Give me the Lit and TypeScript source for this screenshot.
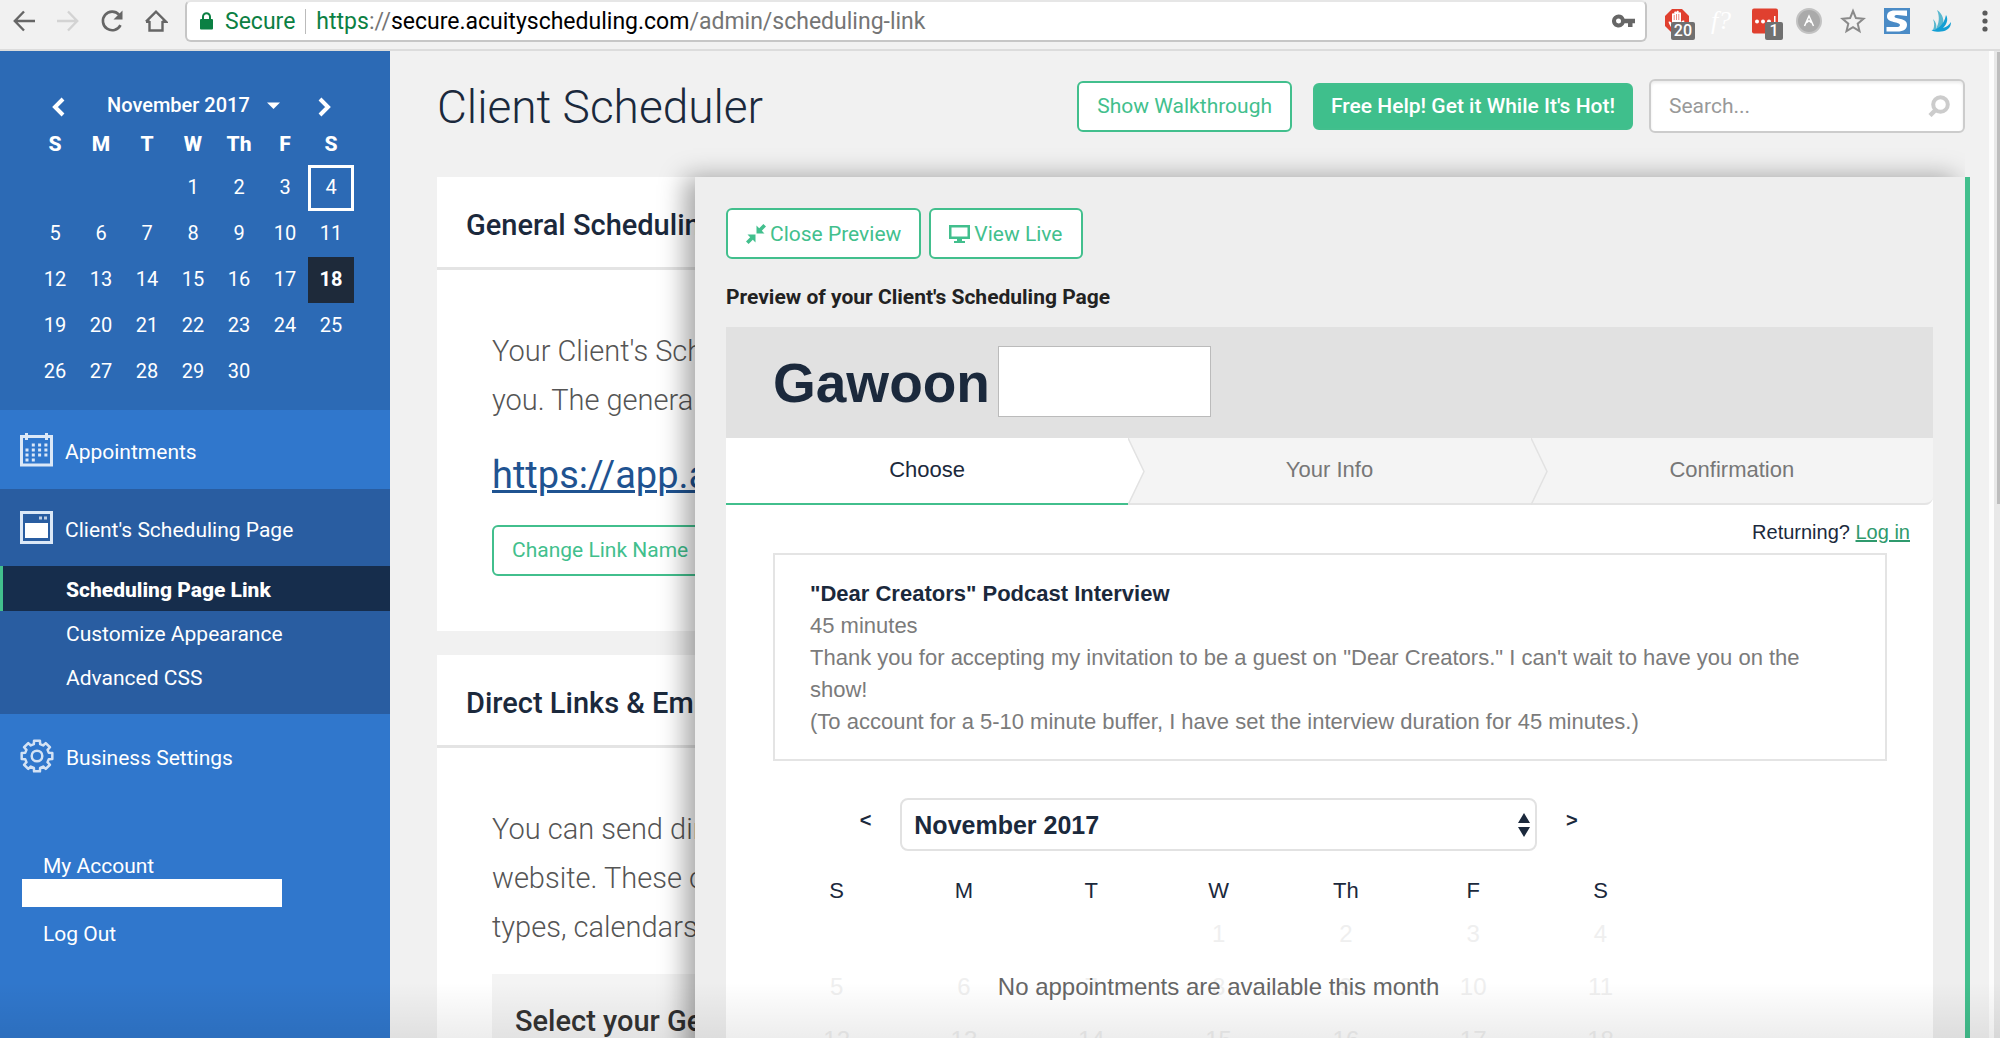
import { LitElement, html, css, svg } from "lit";
import { customElement, state } from "lit/decorators.js";
import { classMap } from "lit/directives/class-map.js";

const WEEKDAYS = ["S", "M", "T", "W", "Th", "F", "S"];

/** Days of November 2017 in weeks; 0 marks an empty cell. */
const WEEKS: number[][] = Array.from({ length: 5 }, (_, week) =>
  Array.from({ length: 7 }, (_, day) => {
    const date = week * 7 + day - 2;
    return date >= 1 && date <= 30 ? date : 0;
  })
);

const base = css`
  :host {
    display: block;
    font-family: Roboto, "Liberation Sans", sans-serif;
  }
  * {
    box-sizing: border-box;
  }
  h1, h2, h3, p {
    margin: 0;
  }
  button, input, select {
    font: inherit;
    color: inherit;
    margin: 0;
  }
  button, select {
    cursor: pointer;
  }
  svg {
    display: block;
    flex: none;
  }
`;

const buttons = css`
  .btn {
    display: inline-flex;
    align-items: center;
    gap: 4px;
    height: 51px;
    padding: 0 18px;
    border: 2px solid #42bf8d;
    border-radius: 6px;
    background: #fff;
    color: #42bf8d;
    font-size: 21px;
    font-weight: 400;
    white-space: nowrap;
    text-decoration: none;
  }
  .btn.solid {
    height: 47px;
    padding: 0 16px;
    background: #3fbf8c;
    color: #fff;
    font-weight: 500;
  }
`;

@customElement("browser-bar")
export class BrowserBar extends LitElement {
  static styles = [
    base,
    css`
      .bar {
        display: flex;
        height: 51px;
        background: #f1f1f1;
        border-bottom: 2px solid #dcdcdc;
        color: #5f5f5f;
      }
      .icon {
        display: flex;
        align-items: center;
        justify-content: center;
        width: 44px;
        height: 41px;
        padding: 0;
        border: 0;
        background: none;
      }
      .history {
        display: flex;
        padding: 0 7px 0 2px;
      }
      .address {
        flex: 1;
        display: flex;
        align-items: center;
        height: 42px;
        padding: 0 9px 0 12px;
        border: 2px solid #c6c6c6;
        border-top-color: #e6e6e6;
        border-radius: 6px;
        background: #fff;
        font-size: 23px;
        line-height: 25px;
        white-space: nowrap;
      }
      .secure {
        padding: 0 10px 0 11px;
        border-right: 1px solid #bbb;
        color: #0b8043;
      }
      .url {
        flex: 1;
        padding-left: 10px;
        color: #757575;
      }
      .scheme {
        color: #0b8043;
      }
      .domain {
        color: #000;
      }
      .tools {
        display: flex;
        padding-left: 8px;
      }
      .tool {
        position: relative;
      }
      .badge {
        position: absolute;
        right: 4px;
        top: 22px;
        min-width: 18px;
        padding: 0 3px;
        border-radius: 2px;
        background: #707070;
        color: #fff;
        font-size: 16px;
        font-weight: 500;
        line-height: 18px;
      }
      .formula {
        color: #fff;
        font: italic 26px "Liberation Serif", serif;
      }
      .menu {
        width: 37px;
        justify-content: flex-end;
        padding-right: 12px;
      }
    `,
  ];

  render() {
    return html`
      <header class="bar">
        <nav class="history" aria-label="History">
          <button class="icon" aria-label="Back">
            <svg width="24" height="24" viewBox="0 0 24 24" fill="none" stroke="#666" stroke-width="2.400"><path d="M23 12H3M12 2.500L2.800 12l9.200 9.500" /></svg>
          </button>
          <button class="icon" aria-label="Forward">
            <svg width="24" height="24" viewBox="0 0 24 24" fill="none" stroke="#d3d3d3" stroke-width="2.400"><path d="M1 12h20M12 2.500l9.200 9.500-9.200 9.500" /></svg>
          </button>
          <button class="icon" aria-label="Reload">
            <svg width="24" height="24" viewBox="0 0 24 24" fill="none" stroke="#666" stroke-width="2.600"><path d="M20.500 16.200A9.300 9.300 0 1 1 19 5.600" /><path d="M22.500 1.500v9h-9z" fill="#666" stroke="none" /></svg>
          </button>
          <button class="icon" aria-label="Home">
            <svg width="24" height="24" viewBox="0 0 24 24" fill="none" stroke="#666" stroke-width="2.400"><path d="M5.500 12v9.500h13V12M2 12.700L12 2.600l10 10.100h-4M2 12.700h4" /></svg>
          </button>
        </nav>
        <div class="address">
          <svg width="15" height="18" viewBox="0 0 15 18"><rect x="1" y="7" width="13" height="10.500" rx="1" fill="#0b8043" /><path d="M4 7.500V4.800a3.500 3.500 0 0 1 7 0v2.700" fill="none" stroke="#0b8043" stroke-width="2" /></svg>
          <span class="secure">Secure</span>
          <span class="url"><span class="scheme">https</span>://<span class="domain">secure.acuityscheduling.com</span>/admin/scheduling-link</span>
          <svg width="24" height="14" viewBox="0 0 24 14" fill="#666"><path fill-rule="evenodd" d="M6.500 0.500a6.500 6.500 0 1 0 6.100 8.700H16V13h4.500V9.200H23V4.800H12.600A6.500 6.500 0 0 0 6.500 0.500zm0 4a2.500 2.500 0 1 1 0 5 2.500 2.500 0 0 1 0-5z" /></svg>
        </div>
        <div class="tools">
          <button class="icon tool" aria-label="Ad blocker">
            <svg width="26" height="26" viewBox="0 0 26 26"><path d="M8 1h10l7 7v10l-7 7H8l-7-7V8z" fill="#e0402f" /><path d="M8 21c-1-2-3-5-3.500-7 1-1 2.500 0 3.500 1.800V6.500c0-1.600 2.200-1.600 2.200 0V4.600c0-1.600 2.300-1.600 2.300 0V4c0-1.600 2.300-1.600 2.300 0v1.400c0-1.500 2.200-1.500 2.200 0V14c1-1.300 2.500-2 3.500-1-1 2-2 5-4 8z" fill="#fff" /><path d="M10.200 7v5M12.500 6v6M14.800 6v6" stroke="#e0402f" stroke-width=".6" /></svg>
            <span class="badge">20</span>
          </button>
          <button class="icon formula">f?</button>
          <button class="icon tool" aria-label="Passwords">
            <svg width="26" height="26" viewBox="0 0 26 26"><rect width="26" height="25" rx="2" y="0.500" fill="#e0402f" /><g fill="#fff"><circle cx="5" cy="13.500" r="2" /><circle cx="11" cy="13.500" r="2" /><circle cx="17" cy="13.500" r="2" /><rect x="22" y="8" width="1.500" height="9" /></g></svg>
            <span class="badge">1</span>
          </button>
          <button class="icon" aria-label="Annotate">
            <svg width="26" height="26" viewBox="0 0 26 26" fill="none"><circle cx="13" cy="13" r="12" fill="#aaa" stroke="#c2c2c2" stroke-width="2" /><path d="M8.500 18L13 8l4.500 10M10.500 14.700l2.500-2 2.500 2" stroke="#fff" stroke-width="1.500" /></svg>
          </button>
          <button class="icon" aria-label="Bookmark">
            <svg width="26" height="26" viewBox="0 0 26 26" fill="none" stroke="#8a8a8a" stroke-width="2"><path d="M13 3l2.900 7.100 7.600.6-5.800 5 1.800 7.400L13 19.100l-6.500 4 1.800-7.400-5.800-5 7.600-.6z" /></svg>
          </button>
          <button class="icon" aria-label="Snippets">
            <svg width="26" height="26" viewBox="0 0 26 26"><rect width="26" height="26" fill="#4a8bc6" /><path d="M23 8V2.500H11C5 2.500 3 5 3 8.700c0 6.300 13 4.800 13 8.300 0 1.700-2 2-4 2H2.500v4.500H13c7 0 10-2.300 10-7 0-7-12.500-5-12.500-8C10.500 7 12 7 13.500 7 17 7 20 8 23 8z" fill="#fff" /></svg>
          </button>
          <button class="icon" aria-label="Sharing">
            <svg width="22" height="24" viewBox="0 0 22 24"><path d="M7 1c6 4 8 10 5 19H6c3-6 4-12 1-19z" fill="#5bb8cf" /><path d="M3 10c3 3 4 6 3 10l-3 1c1.500-4 1.500-7 0-11z" fill="#5bb8cf" /><path d="M16 6c3 5 0 10-3 13 4-1 6-3 8-6 0 6-4 9-10 9.500-4 .3-8 .5-9.500-1.500C6 21 14 17 16 6z" fill="#139fd4" /></svg>
          </button>
          <button class="icon menu" aria-label="Menu">
            <svg width="6" height="22" viewBox="0 0 6 22" fill="#5a5a5a"><circle cx="3" cy="3" r="2.600" /><circle cx="3" cy="11" r="2.600" /><circle cx="3" cy="19" r="2.600" /></svg>
          </button>
        </div>
      </header>
    `;
  }
}

/** Outline of a round gear with eight teeth, centred on (17, 17). */
const gearPath = (): string => {
  const points: string[] = [];
  for (let tooth = 0; tooth < 8; tooth++) {
    const mid = (tooth * Math.PI) / 4;
    for (const [offset, radius] of [[-0.26, 12.200], [-0.19, 15.600], [0.19, 15.600], [0.26, 12.200]]) {
      const x = 17 + radius * Math.sin(mid + offset);
      const y = 17 - radius * Math.cos(mid + offset);
      points.push(`${x.toFixed(2)} ${y.toFixed(2)}`);
    }
  }
  return `M${points.join("L")}z`;
};

@customElement("side-nav")
export class SideNav extends LitElement {
  static styles = [
    base,
    css`
      :host {
        background: #3077cc;
        color: #fff;
        font-size: 21px;
      }
      .calendar {
        height: 359px;
        padding: 31px 36px 0 32px;
        background: #2c6ab5;
      }
      .month {
        display: flex;
        align-items: center;
        justify-content: space-between;
        height: 46px;
        padding: 0 22px 0 19px;
      }
      .arrow {
        padding: 4px 0 0;
        border: 0;
        background: none;
      }
      .picker {
        display: flex;
        align-items: center;
        gap: 17px;
        padding-left: 4px;
      }
      .picker select {
        appearance: none;
        padding: 0;
        border: 0;
        background: none;
        font-size: 20px;
        font-weight: 500;
      }
      .days {
        width: 322px;
        table-layout: fixed;
        border-collapse: collapse;
        text-align: center;
      }
      .days th, .days td {
        height: 46px;
        padding: 0 0 3px;
        font-size: 20px;
      }
      .days th {
        height: 37px;
        font-size: 21px;
        font-weight: 800;
        padding: 0 0 5px;
      }
      .days td.outlined {
        box-shadow: inset 0 0 0 3px #fff;
      }
      .days td.today {
        background: #1e2a3a;
        font-weight: 700;
      }
      a {
        color: inherit;
        text-decoration: none;
      }
      .item {
        display: flex;
        align-items: center;
        gap: 12px;
        height: 79px;
        padding-left: 20px;
      }
      .item span {
        padding-top: 4px;
      }
      .item.settings {
        height: 84px;
      }
      .group {
        padding-bottom: 15px;
        background: #295da1;
      }
      .group .item {
        height: 77px;
      }
      .sub {
        display: flex;
        align-items: center;
        height: 44px;
        padding: 2px 0 0 66px;
      }
      .sub.active {
        height: 45px;
        padding-left: 63px;
        border-left: 3px solid #42bf8d;
        background: #162d4c;
        font-weight: 800;
      }
      .account {
        display: flex;
        flex-direction: column;
        padding: 55px 22px 0;
      }
      .account a {
        height: 26px;
        padding-left: 21px;
        line-height: 27px;
      }
      .blank {
        width: 260px;
        height: 28px;
        margin-bottom: 14px;
        background: #fff;
      }
    `,
  ];

  render() {
    return html`
      <section class="calendar">
        <div class="month">
          <button class="arrow" aria-label="Previous month">
            <svg width="14" height="20" viewBox="0 0 14 20" fill="none" stroke="#fff" stroke-width="4"><path d="M12 2L4 10l8 8" /></svg>
          </button>
          <label class="picker">
            <select aria-label="Month">
              <option>November 2017</option>
            </select>
            <svg width="13" height="7" viewBox="0 0 13 7" fill="#fff"><path d="M0 .5h13L6.500 7z" /></svg>
          </label>
          <button class="arrow" aria-label="Next month">
            <svg width="14" height="20" viewBox="0 0 14 20" fill="none" stroke="#fff" stroke-width="4"><path d="M2 2l8 8-8 8" /></svg>
          </button>
        </div>
        <table class="days">
          <thead>
            <tr>${WEEKDAYS.map((day) => html`<th scope="col">${day}</th>`)}</tr>
          </thead>
          <tbody>
            ${WEEKS.map(
              (week) => html`<tr>
                ${week.map((day) => html`<td class=${classMap({ outlined: day === 4, today: day === 18 })}>${day || ""}</td>`)}
              </tr>`
            )}
          </tbody>
        </table>
      </section>
      <nav aria-label="Main">
        <a class="item" href="#appointments">
          <svg width="33" height="34" viewBox="0 0 33 34" fill="#dbe8f7">
            <path d="M1.500 3.500h30v28.500h-30z" fill="none" stroke="#dbe8f7" stroke-width="3" />
            <rect x="5" y="0" width="3" height="7" /><rect x="25" y="0" width="3" height="7" />
            ${[0, 1, 2, 3].flatMap((row) =>
              [0, 1, 2, 3].map((col) =>
                (row === 0 && col === 0) || (row === 3 && col > 1)
                  ? svg``
                  : svg`<rect x=${5.5 + col * 6.300} y=${10.500 + row * 5} width="3" height="3" />`
              )
            )}
          </svg>
          <span>Appointments</span>
        </a>
        <div class="group">
          <a class="item" href="#scheduling">
            <svg width="33" height="33" viewBox="0 0 33 33" fill="#fff">
              <path d="M1.500 1.500h30v30h-30z" fill="none" stroke="#dbe8f7" stroke-width="3" />
              <rect x="5" y="12" width="23" height="15" />
              <rect x="19" y="5.500" width="3" height="3" opacity=".7" /><rect x="24" y="5.500" width="3" height="3" opacity=".7" />
            </svg>
            <span>Client's Scheduling Page</span>
          </a>
          <a class="sub active" href="#link" aria-current="page">Scheduling Page Link</a>
          <a class="sub" href="#appearance">Customize Appearance</a>
          <a class="sub" href="#css">Advanced CSS</a>
        </div>
        <a class="item settings" href="#settings">
          <svg width="34" height="34" viewBox="0 0 34 34" fill="none" stroke="#d3e2f4" stroke-width="2.500" stroke-linejoin="round">
            <path d=${gearPath()} /><circle cx="17" cy="17" r="5.300" />
          </svg>
          <span>Business Settings</span>
        </a>
      </nav>
      <div class="account">
        <a href="#account">My Account</a>
        <div class="blank"></div>
        <a href="#logout">Log Out</a>
      </div>
    `;
  }
}

@customElement("client-preview")
export class ClientPreview extends LitElement {
  @state() private step = 0;

  static styles = [
    base,
    buttons,
    css`
      :host {
        padding: 31px 32px 0 31px;
        background: #eee;
      }
      .actions {
        display: flex;
        gap: 8px;
      }
      .title {
        margin: 24px 0 16px;
        color: #222;
        font-size: 21px;
        font-weight: 700;
        line-height: 28px;
      }
      .page {
        background: #fff;
        font-family: "Liberation Sans", Arial, sans-serif;
        color: #1b293c;
        font-size: 22px;
      }
      .owner {
        display: flex;
        align-items: center;
        gap: 8px;
        height: 111px;
        padding-left: 47px;
        background: #e1e1e1;
      }
      .owner h2 {
        font-size: 55px;
        font-weight: 700;
      }
      .blank {
        width: 213px;
        height: 71px;
        margin-bottom: 2px;
        border: 1px solid #bbb;
        background: #fff;
      }
      .steps {
        display: grid;
        grid-template-columns: repeat(3, 1fr);
        height: 67px;
        background: #f4f4f4;
        border-radius: 0 0 8px 0;
      }
      .step {
        display: flex;
        position: relative;
        align-items: center;
        justify-content: center;
        padding: 0 0 2px;
        border: 0;
        border-bottom: 2px solid #e4e4e4;
        background: none;
        color: #777;
      }
      .step:last-child {
        border-radius: 0 0 8px 0;
      }
      .step.current {
        border-bottom-color: #42bf8d;
        background: #fff;
        color: #1b293c;
      }
      .point {
        position: absolute;
        left: 100%;
        top: 0;
        z-index: 1;
      }
      .login {
        padding: 16px 23px 0 0;
        font-size: 20px;
        line-height: 22px;
        text-align: right;
      }
      .login a {
        color: #2f9a6d;
      }
      .body {
        padding: 10px 46px 0 47px;
      }
      .offer {
        padding: 23px 36px 21px 35px;
        border: 2px solid #e4e4e4;
        color: #7b7b7b;
        line-height: 32px;
      }
      .offer h3 {
        color: #1b293c;
        font-size: 22px;
      }
      .month {
        width: 80%;
        padding-top: 37px;
      }
      .pager {
        display: grid;
        grid-template-columns: 1fr 5fr 1fr;
      }
      .turn {
        height: 45px;
        padding: 0 29px;
        border: 0;
        background: none;
        font-size: 20px;
        font-weight: 700;
        text-align: right;
      }
      .turn.next {
        text-align: left;
      }
      .select {
        display: grid;
        align-items: center;
      }
      .select > * {
        grid-area: 1 / 1;
      }
      .select select {
        appearance: none;
        width: 100%;
        height: 53px;
        padding: 0 12px;
        border: 2px solid #e2e2e2;
        border-radius: 8px;
        background: #fff;
        font-size: 25px;
        font-weight: 700;
      }
      .select svg {
        justify-self: end;
        margin-right: 7px;
        pointer-events: none;
      }
      .grid {
        display: grid;
      }
      .grid > * {
        grid-area: 1 / 1;
      }
      table {
        width: 100%;
        table-layout: fixed;
        border-collapse: collapse;
        text-align: center;
      }
      th, td {
        padding: 0;
      }
      th {
        height: 56px;
        padding-top: 24px;
        font-weight: 400;
      }
      td {
        height: 53px;
        color: #efefef;
        font-size: 24px;
      }
      .notice {
        padding-top: 119px;
        color: #666;
        font-size: 24px;
        line-height: 34px;
        text-align: center;
      }
    `,
  ];

  render() {
    return html`
      <div class="actions">
        <button class="btn">
          <svg width="20" height="20" viewBox="0 0 20 20" fill="#42bf8d"><path d="M10.500 9.500V1.500l2.700 2.700L17.400 0 20 2.600l-4.200 4.200 2.700 2.700zM9.500 10.500v8l-2.700-2.700L2.600 20 0 17.400l4.200-4.200-2.700-2.700z" /></svg>
          Close Preview
        </button>
        <a class="btn" href="#live">
          <svg width="21" height="18" viewBox="0 0 21 18" fill="#42bf8d"><path fill-rule="evenodd" d="M0 0h21v14h-8v2h3v2H5v-2h3v-2H0zM2.500 2.500v9h16v-9z" /></svg>
          View Live
        </a>
      </div>
      <h2 class="title">Preview of your Client's Scheduling Page</h2>
      <article class="page">
        <header class="owner">
          <h2>Gawoon</h2>
          <div class="blank"></div>
        </header>
        <div class="steps">
          ${["Choose", "Your Info", "Confirmation"].map(
            (label, index) => html`<button
              class=${classMap({ step: true, current: index === this.step })}
              @click=${() => (this.step = index)}
            >
              ${label}
              ${index < 2
                ? html`<svg class="point" width="17" height="67" viewBox="0 0 17 67"><path d="M0 0l16 33.500L0 67" fill=${index === this.step ? "#fff" : "#f4f4f4"} stroke="#e2e2e2" stroke-width="1.500" /></svg>`
                : ""}
            </button>`
          )}
        </div>
        <p class="login">Returning? <a href="#login">Log in</a></p>
        <div class="body">
          <section class="offer">
            <h3>"Dear Creators" Podcast Interview</h3>
            <p>45 minutes</p>
            <p>Thank you for accepting my invitation to be a guest on "Dear Creators." I can't wait to have you on the show!</p>
            <p>(To account for a 5-10 minute buffer, I have set the interview duration for 45 minutes.)</p>
          </section>
          <section class="month">
            <div class="pager">
              <button class="turn" aria-label="Previous month">&lt;</button>
              <label class="select">
                <select aria-label="Month">
                  <option>November 2017</option>
                </select>
                <svg width="12" height="24" viewBox="0 0 12 24" fill="#1b293c"><path d="M6 0l6 10H0zM6 24L0 14h12z" /></svg>
              </label>
              <button class="turn next" aria-label="Next month">&gt;</button>
            </div>
            <div class="grid">
              <table>
                <thead>
                  <tr>${WEEKDAYS.map((day) => html`<th scope="col">${day}</th>`)}</tr>
                </thead>
                <tbody>
                  ${WEEKS.map((week) => html`<tr>${week.map((day) => html`<td>${day || ""}</td>`)}</tr>`)}
                </tbody>
              </table>
              <p class="notice">No appointments are available this month</p>
            </div>
          </section>
        </div>
      </article>
    `;
  }
}

@customElement("app-root")
export class AppRoot extends LitElement {
  static styles = [
    base,
    buttons,
    css`
      :host {
        display: flex;
        flex-direction: column;
        position: relative;
        height: 100vh;
        overflow: hidden;
        background: #f1f1f1;
      }
      .shade {
        position: absolute;
        inset: auto 0 0;
        height: 56px;
        background: linear-gradient(transparent, rgba(0, 0, 0, 0.07));
        pointer-events: none;
      }
      .layout {
        flex: 1;
        display: grid;
        grid-template-columns: 390px minmax(0, 1fr) 11px;
        min-height: 0;
      }
      .main {
        position: relative;
        padding: 28px 24px 0 47px;
      }
      .top {
        display: flex;
        align-items: center;
        height: 54px;
      }
      .top h1 {
        flex: 1;
        padding-top: 2px;
        color: #1b293c;
        font-size: 46px;
        font-weight: 300;
      }
      .help {
        margin: 0 16px 0 21px;
      }
      .search {
        display: flex;
        align-items: center;
        width: 316px;
        height: 54px;
        padding: 0 13px 0 18px;
        border: 2px solid #ccc;
        border-radius: 6px;
        background: #fff;
        box-shadow: inset 0 2px 3px rgba(0, 0, 0, 0.08);
      }
      .search input {
        flex: 1;
        min-width: 0;
        padding: 0;
        border: 0;
        outline: 0;
        background: none;
        font-size: 21px;
      }
      .search input::placeholder {
        color: #999;
      }
      .card {
        background: #fff;
      }
      .cards {
        display: grid;
        gap: 24px;
        padding-top: 44px;
      }
      .card h2 {
        height: 93px;
        padding-left: 29px;
        border-bottom: 3px solid #e4e4e4;
        color: #1b293c;
        font-size: 29px;
        font-weight: 500;
        line-height: 97px;
      }
      .content {
        padding: 57px 55px 55px;
        color: #555;
        font-size: 29px;
        font-weight: 300;
        line-height: 49px;
      }
      .link {
        display: block;
        margin: 23px 0 21px;
        color: #1f5391;
        font-size: 38px;
        font-weight: 400;
        line-height: 54px;
        text-decoration-thickness: 3px;
      }
      .select-box {
        margin-top: 22px;
        padding: 23px;
        background: #f4f4f4;
        color: #333;
        font-weight: 500;
      }
      .preview {
        position: absolute;
        inset: 126px 19px 0 305px;
        border-right: 5px solid #42bf8d;
      }
      .preview client-preview {
        height: 100%;
        overflow: hidden;
        box-shadow: -10px 0 24px rgba(0, 0, 0, 0.35);
        clip-path: inset(-40px 0 0 -40px);
      }
      .track {
        padding: 1px 0 0 3px;
        border-left: 5px solid #fcfcfc;
        background: #e8e8e8;
      }
      .thumb {
        height: 452px;
        background: #bdbdbd;
      }
    `,
  ];

  render() {
    return html`
      <browser-bar></browser-bar>
      <div class="layout">
        <side-nav></side-nav>
        <main class="main">
          <div class="top">
            <h1>Client Scheduler</h1>
            <button class="btn">Show Walkthrough</button>
            <button class="btn solid help">Free Help! Get it While It's Hot!</button>
            <label class="search">
              <input type="search" placeholder="Search..." aria-label="Search" />
              <svg width="22" height="22" viewBox="0 0 22 22" fill="none" stroke="#ccc"><circle cx="12.500" cy="9.500" r="7.300" stroke-width="4" /><path d="M7.500 15L2 20.500" stroke-width="4.500" /></svg>
            </label>
          </div>
          <div class="cards">
            <section class="card">
              <h2>General Scheduling Link</h2>
              <div class="content">
                <p>Your Client's Scheduling<br />you. The general</p>
                <a class="link" href="#app">https://app.acuityscheduling.com</a>
                <button class="btn">Change Link Name</button>
              </div>
            </section>
            <section class="card">
              <h2>Direct Links &amp; Embedding</h2>
              <div class="content">
                <p>You can send direct<br />website. These can<br />types, calendars</p>
                <div class="select-box">Select your General</div>
              </div>
            </section>
          </div>
          <aside class="preview" aria-label="Preview">
            <client-preview></client-preview>
          </aside>
        </main>
        <div class="track"><div class="thumb"></div></div>
      </div>
      <div class="shade"></div>
    `;
  }
}
